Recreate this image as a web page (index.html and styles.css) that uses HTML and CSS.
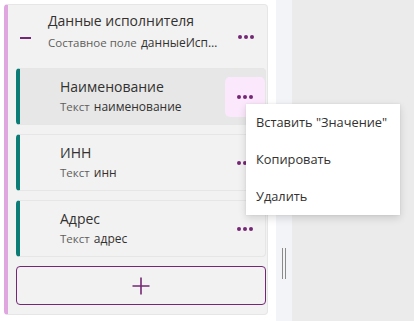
FILE: index.html
```html
<!DOCTYPE html>
<html lang="ru">
<head>
<meta charset="utf-8">
<link rel="stylesheet" href="styles.css">
</head>
<body>
<div class="page">
  <div class="left">
    <div class="card">
      <div class="header">
        <span class="minus"></span>
        <div class="htext">
          <div class="title">Данные исполнителя</div>
          <div class="sub"><span class="type">Составное поле</span> <span class="name">данныеИсп…</span></div>
        </div>
        <button class="dots"><i></i><i></i><i></i></button>
      </div>
      <div class="rows">
        <div class="row hover">
          <div class="rtext">
            <div class="rtitle">Наименование</div>
            <div class="sub"><span class="type">Текст</span> <span class="name">наименование</span></div>
          </div>
          <button class="dots active"><i></i><i></i><i></i></button>
        </div>
        <div class="row">
          <div class="rtext">
            <div class="rtitle">ИНН</div>
            <div class="sub"><span class="type">Текст</span> <span class="name">инн</span></div>
          </div>
          <button class="dots"><i></i><i></i><i></i></button>
        </div>
        <div class="row">
          <div class="rtext">
            <div class="rtitle">Адрес</div>
            <div class="sub"><span class="type">Текст</span> <span class="name">адрес</span></div>
          </div>
          <button class="dots"><i></i><i></i><i></i></button>
        </div>
        <button class="add">
          <svg width="20" height="20" viewBox="0 0 20 20"><path d="M10 1.5V18.5M1.5 10H18.5" stroke="#742774" stroke-width="1.6" fill="none"/></svg>
        </button>
      </div>
    </div>
  </div>
  <div class="strip"><span class="grip"></span></div>
  <div class="rest"></div>
  <ul class="menu">
    <li>Вставить "Значение"</li>
    <li>Копировать</li>
    <li>Удалить</li>
  </ul>
</div>
</body>
</html>
```
FILE: styles.css
```css
* { box-sizing: border-box; }
html, body { margin: 0; padding: 0; }
body {
  font-family: "Open Sans", "Noto Sans", sans-serif;
  background: #ffffff;
  width: 414px;
  height: 321px;
  overflow: hidden;
}
.page {
  position: relative;
  display: flex;
  height: 321px;
}
.left {
  width: 276px;
  padding: 4px 8px 0 4px;
}
.card {
  background: #f2f2f2;
  border: 1px solid #e6e6e6;
  border-left: 4px solid #e0a6e0;
  border-radius: 4px;
  padding: 0 1px 8px 8px;
  height: 311px;
}
.header {
  display: flex;
  align-items: flex-start;
  height: 63px;
  padding-left: 4px;
  padding-top: 6px;
}
.minus {
  width: 11px;
  height: 2px;
  background: #742774;
  margin-top: 26px;
  margin-right: 17px;
  flex: none;
}
.htext { flex: 1; min-width: 0; }
.title {
  font-size: 14px;
  color: #323130;
  line-height: 20px;
}
.sub {
  line-height: 18px;
  white-space: nowrap;
  margin-top: 1px;
}
.type { font-size: 11.5px; color: #605e5c; }
.name { font-size: 12px; color: #323130; }
.dots {
  border: 0;
  background: transparent;
  padding: 0;
  width: 40px;
  height: 40px;
  border-radius: 5px;
  display: flex;
  align-items: center;
  justify-content: center;
  gap: 2px;
  cursor: pointer;
  flex: none;
}
.dots i {
  width: 4px;
  height: 4px;
  border-radius: 50%;
  background: #742774;
}
.header .dots { margin-top: 6px; }
.dots.active { background: #fce8fc; }
.rows {
  display: flex;
  flex-direction: column;
  gap: 9px;
}
.row {
  display: flex;
  align-items: center;
  height: 57px;
  background: #f2f2f2;
  border: 1px solid #e6e6e6;
  border-left: 4px solid #0b7c76;
  border-radius: 4px;
  padding-left: 40px;
}
.row.hover { background: #e7e7e7; }
.rtext { flex: 1; }
.rtitle {
  font-size: 14px;
  color: #323130;
  line-height: 20px;
}
.row .sub { margin-top: -1px; }
.add {
  height: 39px;
  border: 1px solid #742774;
  border-radius: 4px;
  background: #f2f2f2;
  display: flex;
  align-items: center;
  justify-content: center;
  padding: 0;
}
.strip {
  width: 16px;
  background: #f3f4f8;
  display: flex;
  justify-content: center;
  padding-top: 248px;
}
.grip {
  width: 4px;
  height: 31px;
  border-left: 1px solid #8a8a8a;
  border-right: 1px solid #8a8a8a;
}
.rest {
  flex: 1;
  background: #ebebeb;
}
.menu {
  position: absolute;
  left: 246px;
  top: 104px;
  width: 154px;
  margin: 0;
  padding: 0;
  list-style: none;
  background: #ffffff;
  box-shadow: 0 3px 8px rgba(0,0,0,0.14), 0 0 2px rgba(0,0,0,0.08);
}
.menu li {
  height: 37px;
  line-height: 37px;
  padding-left: 10px;
  font-size: 12.8px;
  color: #323130;
  white-space: nowrap;
}
```
